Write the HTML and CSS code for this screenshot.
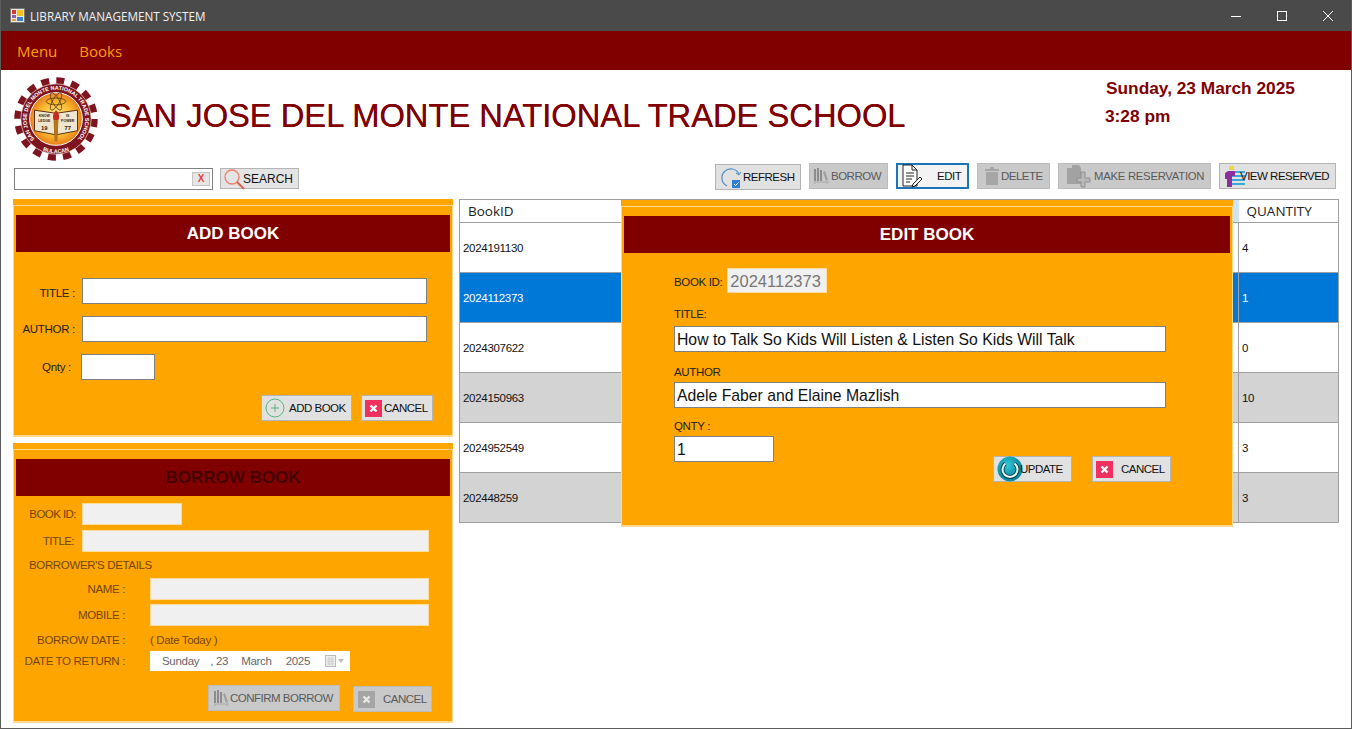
FILE: index.html
```html
<!DOCTYPE html>
<html lang="en">
<head>
<meta charset="utf-8">
<title>Library Management System</title>
<link rel="stylesheet" href="styles.css">
</head>
<body>
<div class="window">
  <div class="titlebar">
    <svg class="app-icon" width="15" height="15" viewBox="0 0 15 15"><rect x="0.5" y="0.5" width="14" height="14" fill="#e8e8e8" stroke="#777"/><rect x="2" y="2" width="4" height="4" fill="#c8402c"/><rect x="7" y="2" width="6" height="6" fill="#f5c21b"/><rect x="2" y="7" width="4" height="3" fill="#8a5fb0"/><rect x="2" y="11" width="4" height="2" fill="#d9a441"/><rect x="7" y="9" width="6" height="4" fill="#3d7cc9"/></svg>
    <span class="app-title">LIBRARY MANAGEMENT SYSTEM</span>
    <div class="win-controls">
      <svg width="12" height="12" viewBox="0 0 12 12"><path d="M1 6.500h10" stroke="#fff" fill="none"/></svg>
      <svg width="12" height="12" viewBox="0 0 12 12"><rect x="1.500" y="1.500" width="9" height="9" stroke="#fff" fill="none"/></svg>
      <svg width="12" height="12" viewBox="0 0 12 12"><path d="M1 1l10 10M11 1L1 11" stroke="#fff" fill="none"/></svg>
    </div>
  </div>
  <nav class="menubar"><span>Menu</span><span>Books</span></nav>
  <header class="banner">
    <svg class="logo" width="86" height="84" viewBox="0 0 86 86">
      <defs>
        <radialGradient id="sun"><stop offset="0" stop-color="#fff3a0"/><stop offset="0.65" stop-color="#f8b92e"/><stop offset="1" stop-color="#e87d1a"/></radialGradient>
        <path id="ringtop" d="M23.700 66A30 30 0 1 1 62.300 66"/>
        <path id="ringbot" d="M20.500 69.800A35 35 0 0 0 65.500 69.800"/>
      </defs>
      <circle cx="43" cy="43" r="38.500" fill="none" stroke="#7d1420" stroke-width="8.500" stroke-dasharray="8 7.120"/>
      <circle cx="43" cy="43" r="36" fill="#7d1420"/>
      <circle cx="43" cy="43" r="36" fill="none" stroke="#f3e3d0" stroke-width="0.700"/>
      <circle cx="43" cy="43" r="27" fill="url(#sun)" stroke="#fff"/>
      <text class="logo-ring"><textPath href="#ringtop" startOffset="50%" text-anchor="middle">SAN JOSE DEL MONTE NATIONAL TRADE SCHOOL</textPath></text>
      <text class="logo-ring"><textPath href="#ringbot" startOffset="50%" text-anchor="middle">BULACAN</textPath></text>
      <g fill="none" stroke="#5b3a1a" stroke-width="0.800"><ellipse cx="43" cy="25" rx="10" ry="3.500"/><ellipse cx="43" cy="25" rx="10" ry="3.500" transform="rotate(60 43 25)"/><ellipse cx="43" cy="25" rx="10" ry="3.500" transform="rotate(120 43 25)"/></g>
      <path d="M21 34L42 37V59L21 55Z" fill="#efe6d0" stroke="#5a2c10"/>
      <path d="M65 34L44 37V59L65 55Z" fill="#efe6d0" stroke="#5a2c10"/>
      <text class="logo-book" x="31" y="41" text-anchor="middle">KNOW</text>
      <text class="logo-book" x="31" y="46" text-anchor="middle">LEDGE</text>
      <text class="logo-book" x="55" y="41" text-anchor="middle">IS</text>
      <text class="logo-book" x="55" y="46" text-anchor="middle">POWER</text>
      <text class="logo-year" x="31" y="54" text-anchor="middle">19</text>
      <text class="logo-year" x="55" y="54" text-anchor="middle">77</text>
      <path d="M40.500 44h5l-1 22h-3z" fill="#b8741a"/>
      <path d="M43 34c3 3 4 6 2.500 10h-5c-1.500-4 0-7 2.500-10z" fill="#c8281e"/>
    </svg>
    <h1 class="school">SAN JOSE DEL MONTE NATIONAL TRADE SCHOOL</h1>
    <div class="clock">
      <div class="clock-date">Sunday, 23 March 2025</div>
      <div class="clock-time">3:28 pm</div>
    </div>
  </header>
  <div class="toolbar">
    <div class="search">
      <div class="search-box"><span class="clear-x">X</span></div>
      <button class="btn search-btn">
        <svg width="24" height="22" viewBox="0 0 24 22"><circle cx="9" cy="9" r="7" fill="none" stroke="#ef7d6c" stroke-width="1.300"/><path d="M14 14l7 7" stroke="#e0604f" stroke-width="2"/></svg>
        <span>SEARCH</span>
      </button>
    </div>
    <div class="actions">
      <button class="btn refresh">
        <svg width="23" height="24" viewBox="0 0 23 24"><path d="M8 21A9 9 0 1 1 20 9" fill="none" stroke="#4f8fc9" stroke-width="1.200"/><path d="M17 8l3 2 2-3" fill="none" stroke="#4f8fc9"/><rect x="13" y="15" width="8" height="8" fill="#2f7fd0"/><path d="M15 19l1.500 1.500 3-3" stroke="#fff" fill="none"/></svg>
        <span>REFRESH</span>
      </button>
      <button class="btn off borrow">
        <svg width="18" height="18" viewBox="0 0 18 18"><path d="M1 2h2v12H1zM4 1h2v13H4zM7 3h2v11H7z" fill="#8c8c8c"/><path d="M10 5l2-1 3 9-2 1z" fill="#a0a0a0"/><path d="M1 15h15M2 15v2M14 15v2" stroke="#aaa"/></svg>
        <span>BORROW</span>
      </button>
      <button class="btn edit">
        <svg width="24" height="24" viewBox="0 0 24 24"><path d="M3 1h9l5 5v16H3zM12 1v5h5" fill="#fff" stroke="#222"/><path d="M6 9h8M6 12h8M6 15h6M6 18h4" stroke="#222"/><path d="M13 20l7-7 2 2-7 7-3 1z" fill="#fff" stroke="#222"/></svg>
        <span>EDIT</span>
      </button>
      <button class="btn off delete">
        <svg width="16" height="18" viewBox="0 0 16 18"><rect x="2" y="5" width="12" height="13" fill="#a6a6a6"/><rect x="1" y="2" width="14" height="2" fill="#a6a6a6"/><rect x="6" y="0" width="4" height="2" fill="#a6a6a6"/></svg>
        <span>DELETE</span>
      </button>
      <button class="btn off reserve">
        <svg width="26" height="24" viewBox="0 0 26 24"><path d="M2 4h5V1h7l2 3v16H2z" fill="#a2a2a2"/><path d="M12 14h4v-6h4v6h5v4h-5v5h-4v-5h-4z" fill="#b8b8b8" stroke="#8f8f8f"/></svg>
        <span>MAKE RESERVATION</span>
      </button>
      <button class="btn view">
        <svg width="22" height="22" viewBox="0 0 22 22"><g fill="#38a9d6"><rect x="9" y="6" width="13" height="2"/><rect x="9" y="10" width="13" height="2"/><rect x="9" y="14" width="13" height="2"/><rect x="9" y="18" width="13" height="2"/></g><rect x="6" y="1" width="5" height="4" fill="#f3d63a"/><path d="M2 10c0-3 2-4 5-4h5v5H9v11H4v-8H2z" fill="#8b2f9e"/></svg>
        <span>VIEW RESERVED</span>
      </button>
    </div>
  </div>
  <main class="content">
    <aside class="side">
      <section class="panel add-panel">
        <div class="panel-inner">
          <h2 class="panel-head">ADD BOOK</h2>
          <div class="add-form">
            <label class="add-label lbl-first">TITLE :</label><div class="field add-field"></div>
            <label class="add-label">AUTHOR :</label><div class="field add-field"></div>
            <label class="add-label qnty-label">Qnty :</label><div class="field add-field qnty-field"></div>
          </div>
          <div class="add-actions">
            <button class="btn">
              <svg width="20" height="20" viewBox="0 0 20 20"><circle cx="10" cy="10" r="9" fill="none" stroke="#55b77c"/><path d="M10 6v8M6 10h8" stroke="#55b77c"/></svg>
              <span>ADD BOOK</span>
            </button>
            <button class="btn">
              <svg class="x-icon" width="17" height="17" viewBox="0 0 17 17"><rect width="17" height="17" fill="#f0305f"/><path d="M5.500 5.500l6 6M11.500 5.500l-6 6" stroke="#fff" stroke-width="2.400"/></svg>
              <span>CANCEL</span>
            </button>
          </div>
        </div>
      </section>
      <section class="panel borrow-panel">
        <div class="panel-inner">
          <h2 class="panel-head dim-head">BORROW BOOK</h2>
          <div class="borrow-row row-id"><label class="dim lbl-a">BOOK ID:</label><div class="dis w-id"></div></div>
          <div class="borrow-row row-title"><label class="dim lbl-a lbl-title">TITLE:</label><div class="dis w-title"></div></div>
          <div class="dim details">BORROWER'S DETAILS</div>
          <div class="borrow-row row-name"><label class="dim lbl-b">NAME :</label><div class="dis w-name"></div></div>
          <div class="borrow-row row-mobile"><label class="dim lbl-b">MOBILE :</label><div class="dis w-name"></div></div>
          <div class="borrow-row row-bdate"><label class="dim lbl-b">BORROW DATE :</label><span class="dim">( Date Today )</span></div>
          <div class="borrow-row row-rdate"><label class="dim lbl-b">DATE TO RETURN :</label>
            <div class="datepick"><span>Sunday</span><span>, 23</span><span>March</span><span>2025</span>
              <svg width="20" height="12" viewBox="0 0 20 12"><rect x="0.500" y="0.500" width="10" height="11" fill="#eee" stroke="#bbb"/><path d="M2 4h7M2 6.500h7M2 9h7M4 2v8M7 2v8" stroke="#ccc"/><path d="M13 4h6l-3 4z" fill="#bbb"/></svg>
            </div>
          </div>
          <div class="borrow-actions">
            <button class="btn off confirm">
              <svg width="18" height="18" viewBox="0 0 18 18"><path d="M1 2h2v12H1zM4 1h2v13H4zM7 3h2v11H7z" fill="#8c8c8c"/><path d="M10 5l2-1 3 9-2 1z" fill="#a0a0a0"/><path d="M1 15h15M2 15v2M14 15v2" stroke="#aaa"/></svg>
              <span>CONFIRM BORROW</span>
            </button>
            <button class="btn off cancel-off">
              <svg class="x-icon" width="17" height="17" viewBox="0 0 17 17"><rect width="17" height="17" fill="#a5a5a5"/><path d="M5.500 5.500l6 6M11.500 5.500l-6 6" stroke="#e8e8e8" stroke-width="2.400"/></svg>
              <span>CANCEL</span>
            </button>
          </div>
        </div>
      </section>
    </aside>
    <div class="grid-wrap">
      <table class="grid">
        <thead><tr><th class="c-id">BookID</th><th class="c-mid"></th><th class="c-qty">QUANTITY</th></tr></thead>
        <tbody>
          <tr><td>2024191130</td><td></td><td>4</td></tr>
          <tr class="sel"><td>2024112373</td><td></td><td>1</td></tr>
          <tr><td>2024307622</td><td></td><td>0</td></tr>
          <tr class="alt"><td>2024150963</td><td></td><td>10</td></tr>
          <tr><td>2024952549</td><td></td><td>3</td></tr>
          <tr class="alt"><td>202448259</td><td></td><td>3</td></tr>
        </tbody>
      </table>
      <section class="panel edit-panel">
        <div class="panel-inner">
          <h2 class="panel-head edit-head">EDIT BOOK</h2>
          <div class="edit-body">
            <div class="edit-id"><label>BOOK ID:</label><div class="id-box">2024112373</div></div>
            <label class="edit-label l-title">TITLE:</label>
            <div class="field edit-field">How to Talk So Kids Will Listen &amp; Listen So Kids Will Talk</div>
            <label class="edit-label l-author">AUTHOR</label>
            <div class="field edit-field">Adele Faber and Elaine Mazlish</div>
            <label class="edit-label l-qnty">QNTY :</label>
            <div class="edit-bottom">
              <div class="field edit-field edit-qnty">1</div>
              <div class="edit-actions">
                <button class="btn update">
                  <svg width="26" height="26" viewBox="0 0 26 26"><defs><radialGradient id="teal" cx="0.400" cy="0.350"><stop offset="0" stop-color="#35c9d6"/><stop offset="1" stop-color="#0a8ea3"/></radialGradient></defs><circle cx="13" cy="13" r="12.500" fill="url(#teal)"/><path d="M17.500 7.500A7.500 7.500 0 1 1 8.500 7.500" fill="none" stroke="#0f3f4c" stroke-width="4"/><path d="M17.500 7.500A7.500 7.500 0 1 1 8.500 7.500" fill="none" stroke="#e6fafc" stroke-width="2"/></svg>
                  <span>UPDATE</span>
                </button>
                <button class="btn edit-cancel">
                  <svg class="x-icon" width="17" height="17" viewBox="0 0 17 17"><rect width="17" height="17" fill="#f0305f"/><path d="M5.500 5.500l6 6M11.500 5.500l-6 6" stroke="#fff" stroke-width="2.400"/></svg>
                  <span>CANCEL</span>
                </button>
              </div>
            </div>
          </div>
        </div>
      </section>
    </div>
  </main>
</div>
</body>
</html>
```
FILE: styles.css
```css
* { box-sizing: border-box; }
html, body { margin: 0; padding: 0; overflow: hidden; background: #fff; }
body { font-family: "Liberation Sans", Arial, sans-serif; font-size: 12px; color: #111; }
h1, h2 { margin: 0; }
label { display: block; }

.window { width: 1352px; height: 729px; border: 1px solid #5c5c5c; border-top: 0; overflow: hidden; background: #fff; }

.titlebar { height: 31px; margin: 0 -1px; padding-left: 10px; background: #4a4a4a; color: #f2f2f2; display: flex; align-items: center; }
.app-icon { margin-right: 5px; }
.app-title { font-family: "Open Sans", sans-serif; font-size: 11.7px; }
.win-controls { margin-left: auto; display: flex; gap: 34px; padding-right: 18px; }

.menubar { height: 39px; margin: 0 -1px; padding: 1px 0 0 17px; background: #800000; color: #ff9d0a; font-family: "Open Sans", sans-serif; font-size: 15px; display: flex; align-items: center; gap: 22px; }

.banner { height: 92px; display: flex; padding-left: 12px; }
.logo { margin-top: 7px; flex: none; }
.school { margin: 27px 0 0 11px; font-size: 32.7px; line-height: 38px; font-weight: 400; color: #800000; white-space: nowrap; width: 995px; flex: none; text-shadow: 0 0 0.5px #800000; }
.clock { padding-top: 9px; color: #800000; font-weight: 700; font-size: 17.3px; white-space: nowrap; }
.clock-date { line-height: 19px; padding-left: 1px; }
.clock-time { line-height: 19px; margin-top: 9px; }

.toolbar { height: 37px; display: flex; justify-content: space-between; padding: 0 15px 0 13px; }
.search { display: flex; gap: 7px; padding-top: 6px; align-items: flex-start; }
.search-box { width: 199px; height: 22px; border: 1px solid #808080; background: #fff; display: flex; justify-content: flex-end; align-items: center; padding-right: 2px; }
.clear-x { width: 18px; height: 14px; background: #e6e6e6; border: 1px solid #c4c4c4; color: #e8413a; font-weight: 700; font-size: 10px; line-height: 12px; text-align: center; }
.actions { display: flex; gap: 8px; padding-top: 1px; align-items: flex-start; }

.btn { height: 26px; padding: 0; border: 1px solid #b4b4b4; background: #e1e1e1; color: #111; font-family: "Liberation Sans", Arial, sans-serif; font-size: 11.5px; letter-spacing: -0.5px; display: flex; align-items: center; white-space: nowrap; position: relative; }
.btn.off { background: #c9c9c9; border-color: #bcbcbc; color: #5a5a5a; }
.search-btn { width: 79px; height: 21px; padding-left: 2px; font-size: 12px; letter-spacing: 0; background: #e4e4e4; }
.search-btn span { margin-left: -4px; padding-top: 1px; }
.refresh { width: 86px; margin-top: 1px; padding-left: 3px; }
.refresh span { margin-left: 1px; }
.borrow { width: 79px; padding-left: 3px; }
.borrow span { margin-left: 0; }
.edit { width: 73px; border: 2px solid #1b75b8; background: #f3f3f3; padding-left: 2px; }
.edit span { margin-left: 13px; }
.delete { width: 73px; padding-left: 6px; }
.delete span { margin-left: 1px; }
.reserve { width: 153px; padding-left: 6px; }
.reserve span { margin-left: 3px; font-size: 11.3px; letter-spacing: -0.25px; }
.view { width: 117px; padding-left: 3px; }
.view span { margin-left: -5px; }

.content { display: flex; gap: 6px; padding-left: 12px; }
.side { width: 440px; flex: none; display: flex; flex-direction: column; gap: 6px; }

.panel { background: #ffa500; padding-top: 6px; }
.panel-inner { height: 100%; border: 1px solid #ffd98f; border-bottom-width: 2px; padding: 9px 2px 0; }
.panel-head { height: 37px; line-height: 37px; background: #800000; color: #fff; font-size: 17px; font-weight: 700; text-align: center; }
.dim-head { color: #470000; }

.add-panel { height: 238px; }
.add-form { display: grid; grid-template-columns: 59px 345px; row-gap: 12px; column-gap: 7px; padding-top: 26px; align-items: center; }
.add-label { text-align: right; font-size: 11.5px; letter-spacing: -0.3px; color: #222; white-space: nowrap; }
.lbl-first { padding-top: 4px; }
.qnty-label { padding-right: 4px; }
.field { background: #fff; border: 1px solid #7f7f7f; }
.add-field { height: 26px; }
.qnty-field { width: 74px; margin-left: -1px; }
.add-actions { display: flex; justify-content: flex-end; gap: 9px; padding: 15px 17px 0 0; }
.add-actions .btn { padding-left: 3px; }
.add-actions .btn:first-child { width: 91px; }
.add-actions .btn:first-child span { margin-left: 4px; }
.add-actions .btn:last-child { width: 72px; }
.x-icon { flex: none; }
.add-actions .btn:last-child span { margin-left: 2px; }

.borrow-panel { height: 280px; }
.dim { color: #74450a; font-size: 11.5px; letter-spacing: -0.35px; white-space: nowrap; }
.borrow-row { display: flex; align-items: center; }
.dis { height: 22px; background: #f0f0f0; border: 1px solid #ffdc9c; }
.lbl-a { width: 60px; text-align: right; flex: none; margin-right: 6px; letter-spacing: -0.55px; }
.lbl-title { padding-right: 2px; }
.lbl-b { width: 109px; text-align: right; flex: none; margin-right: 25px; }
.w-id { width: 100px; }
.w-title { width: 347px; }
.w-name { width: 279px; }
.row-id { margin-top: 7px; }
.row-title { margin-top: 5px; }
.details { margin: 6px 0 0 13px; line-height: 14px; }
.row-name { margin-top: 6px; }
.row-mobile { margin-top: 4px; }
.row-bdate { margin-top: 5px; height: 18px; }
.row-rdate { margin-top: 2px; height: 20px; }
.datepick { width: 200px; height: 20px; background: #fff; color: #666; font-size: 11.5px; letter-spacing: -0.3px; display: flex; align-items: center; padding-left: 12px; white-space: nowrap; }
.datepick span:nth-child(2) { margin-left: 11px; }
.datepick span:nth-child(3) { margin-left: 13px; }
.datepick span:nth-child(4) { margin-left: 14px; }
.datepick svg { margin-left: 15px; }
.borrow-actions { display: flex; justify-content: flex-end; gap: 13px; padding: 14px 18px 0 0; align-items: flex-start; }
.confirm { width: 132px; padding-left: 4px; }
.confirm span { margin-left: -1px; }
.cancel-off { width: 79px; margin-top: 1px; padding-left: 4px; }
.cancel-off span { margin-left: 8px; }

.grid-wrap { position: relative; width: 880px; flex: none; }
.grid { width: 880px; height: 324px; border-collapse: collapse; table-layout: fixed; border: 1px solid #a0a0a0; background: #fff; }
.grid th { height: 23px; font-family: "Open Sans", sans-serif; font-size: 13.5px; font-weight: 400; text-align: left; border-bottom: 1px solid #a0a0a0; padding: 0 0 0 8px; color: #222; }
.c-id { width: 162px; }
.c-mid { width: 617px; background: #cfe3f5; }
.grid td { height: 50px; padding: 0 0 0 3px; font-size: 11.5px; letter-spacing: -0.3px; border: 1px solid #a0a0a0; color: #111; }
.grid tr.alt td { background: #d3d3d3; }
.grid tr.sel td { background: #0078d7; color: #fff; }
.edit-panel { position: absolute; left: 162px; top: 1px; width: 612px; height: 327px; }
.edit-head { font-size: 17px; font-weight: 700; }
.edit-body { padding: 15px 0 0 50px; }
.edit-id { display: flex; align-items: center; gap: 5px; font-size: 11.5px; letter-spacing: -0.35px; color: #222; }
.edit-id label { padding-top: 2px; }
.id-box { width: 100px; height: 25px; background: #f0f0f0; color: #777; font-size: 16.5px; line-height: 24px; padding-left: 2px; letter-spacing: 0; border: 1px solid #ffdc9c; }
.edit-label { font-size: 11.5px; letter-spacing: -0.35px; color: #222; line-height: 14px; }
.l-title { margin-top: 14px; }
.l-author { margin-top: 13px; }
.l-qnty { margin-top: 11px; }
.edit-field { width: 492px; height: 26px; font-size: 15.75px; line-height: 26px; padding-left: 2px; color: #111; margin-top: 5px; }
.l-author + .edit-field { margin-top: 3px; }
.edit-bottom { display: flex; align-items: flex-start; }
.edit-qnty { width: 100px; flex: none; margin-top: 3px; }
.edit-actions { display: flex; gap: 20px; padding: 23px 0 0 219px; }
.update { width: 79px; padding-left: 3px; }
.update span { margin-left: -3px; }
.edit-cancel { width: 79px; padding-left: 3px; }
.edit-cancel span { margin-left: 8px; }

.logo-ring { font-size: 5.6px; font-weight: 700; fill: #fff; }
.logo-book { font-size: 3.6px; font-weight: 700; fill: #3a1a0a; }
.logo-year { font-size: 6px; font-weight: 700; fill: #3a1a0a; }
```
